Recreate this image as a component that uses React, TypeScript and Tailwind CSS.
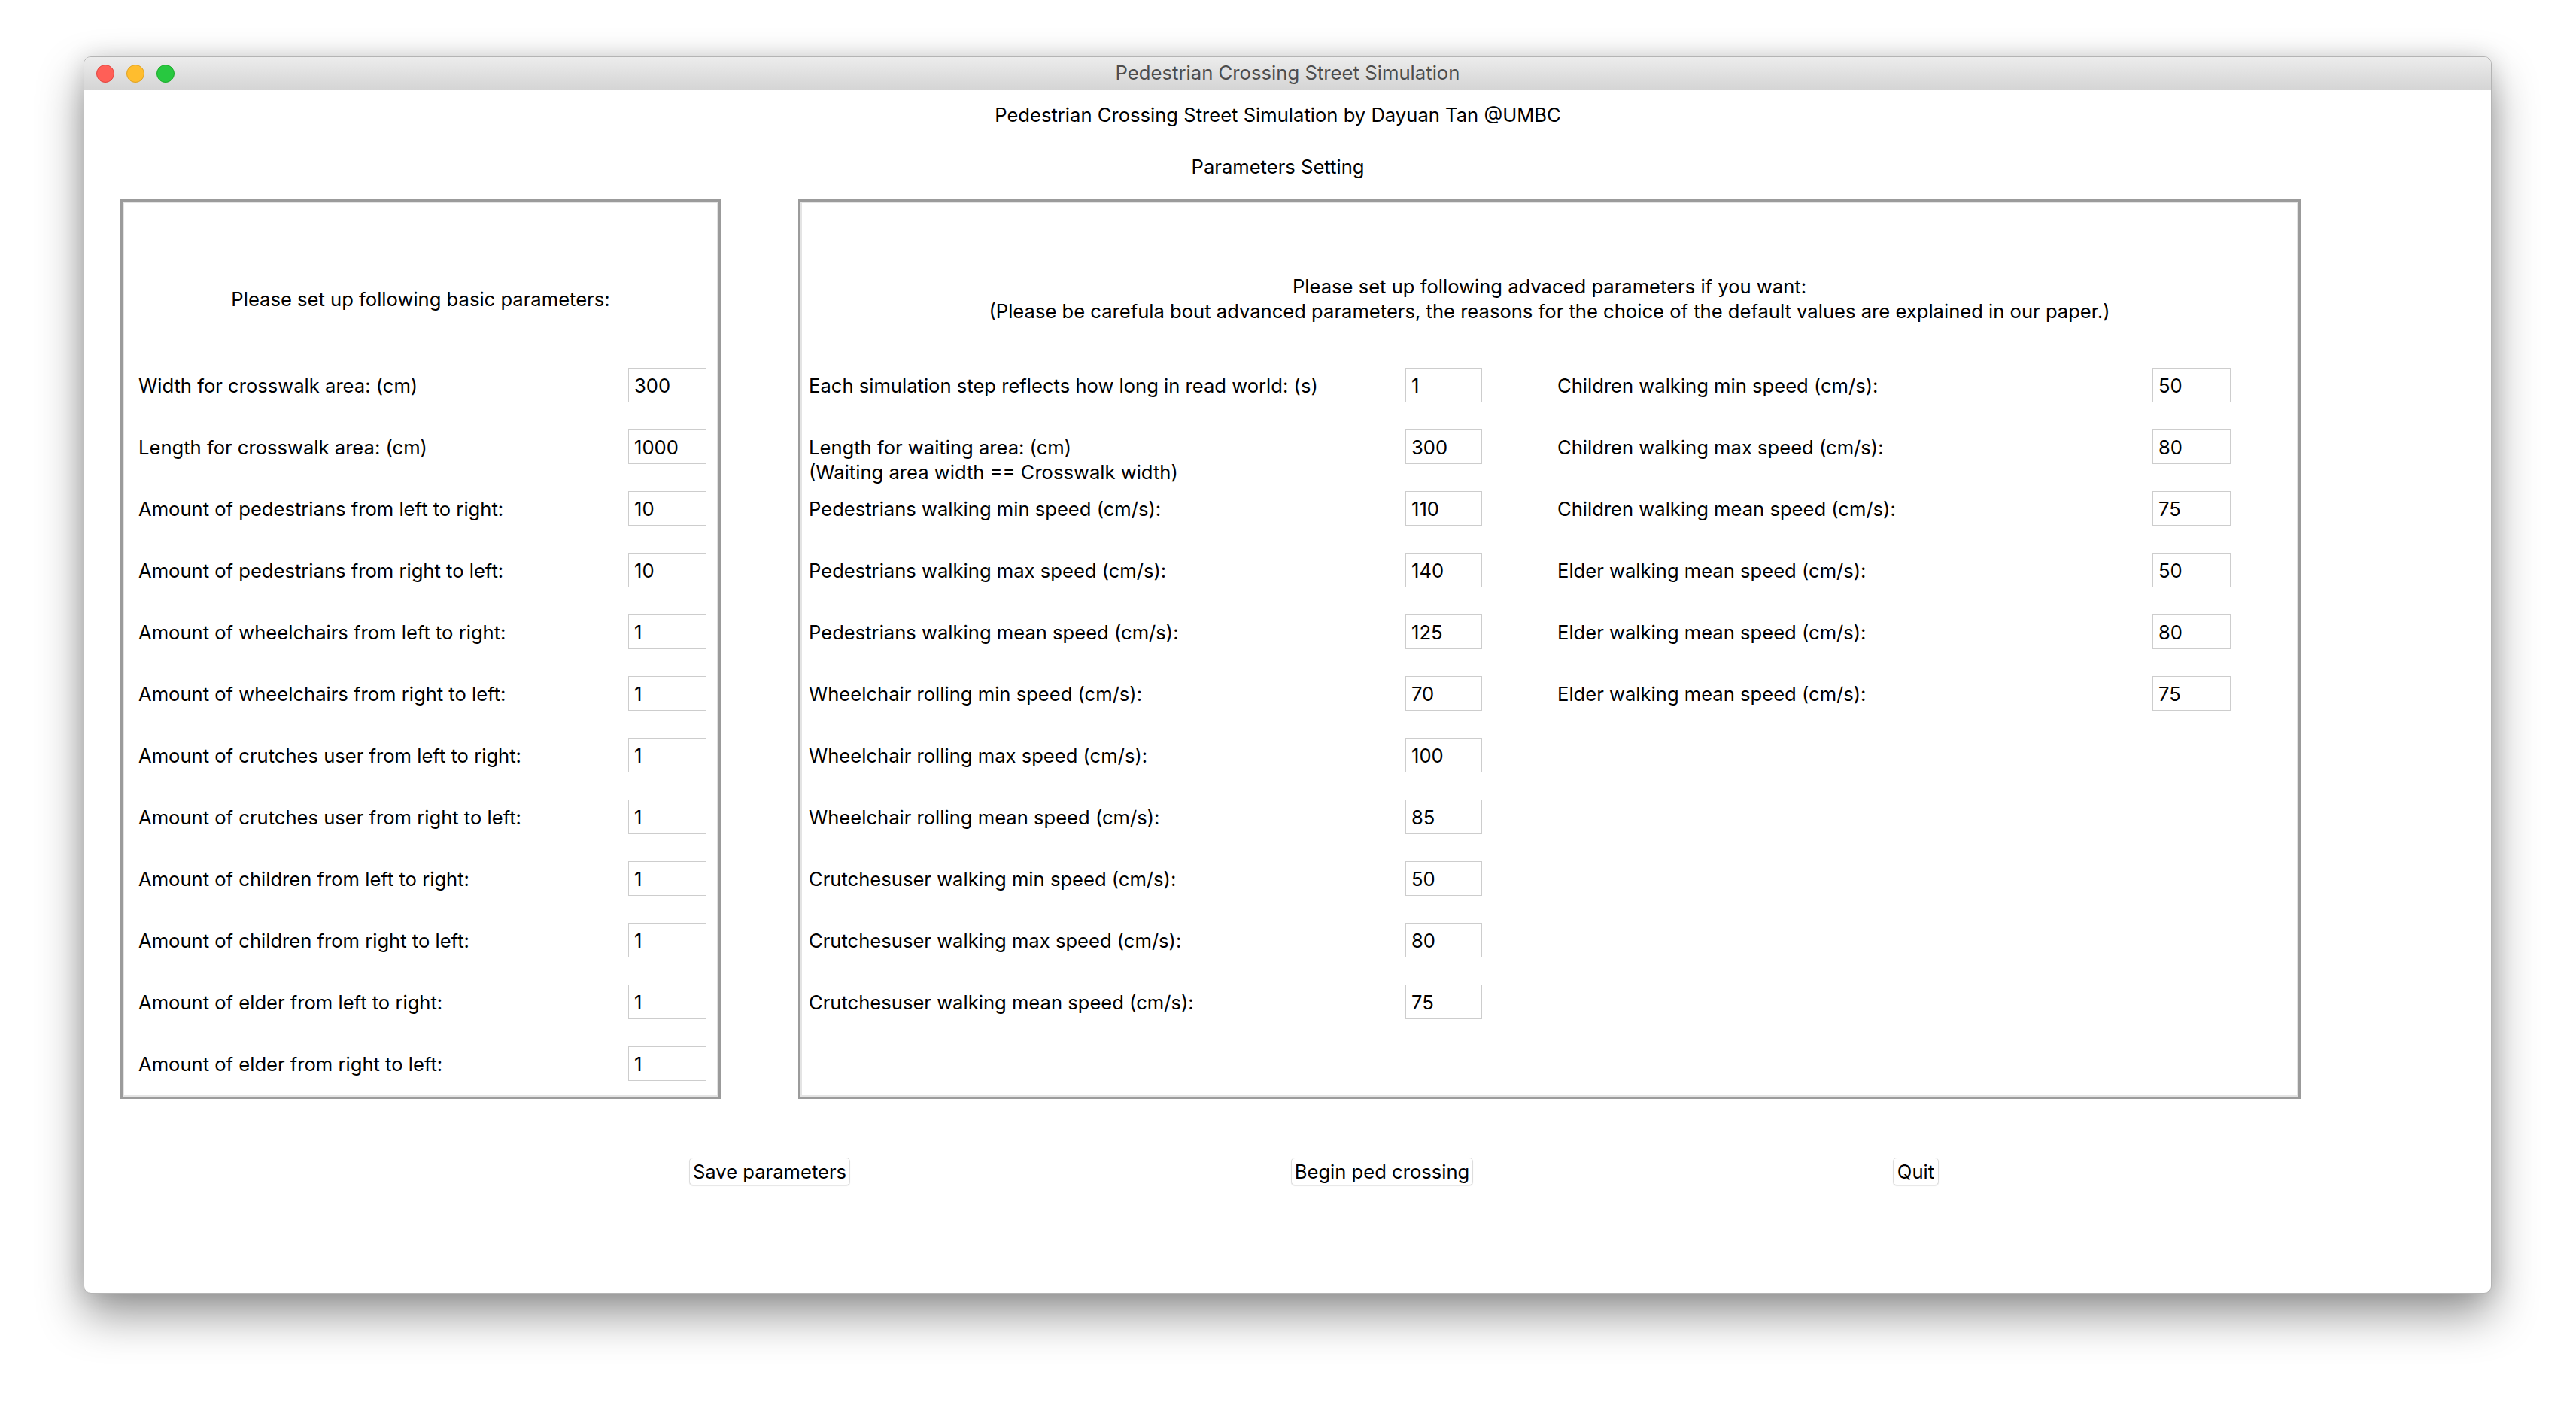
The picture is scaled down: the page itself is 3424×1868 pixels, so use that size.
import React from 'react'

type Param = { label: string; value: string; note?: string }

const basic: Param[] = [
  { label: 'Width for crosswalk area: (cm)', value: '300' },
  { label: 'Length for crosswalk area: (cm)', value: '1000' },
  { label: 'Amount of pedestrians from left to right:', value: '10' },
  { label: 'Amount of pedestrians from right to left:', value: '10' },
  { label: 'Amount of wheelchairs from left to right:', value: '1' },
  { label: 'Amount of wheelchairs from right to left:', value: '1' },
  { label: 'Amount of crutches user from left to right:', value: '1' },
  { label: 'Amount of crutches user from right to left:', value: '1' },
  { label: 'Amount of children from left to right:', value: '1' },
  { label: 'Amount of children from right to left:', value: '1' },
  { label: 'Amount of elder from left to right:', value: '1' },
  { label: 'Amount of elder from right to left:', value: '1' },
]

const advancedLeft: Param[] = [
  { label: 'Each simulation step reflects how long in read world: (s)', value: '1' },
  { label: 'Length for waiting area: (cm)', note: '(Waiting area width == Crosswalk width)', value: '300' },
  { label: 'Pedestrians walking min speed (cm/s):', value: '110' },
  { label: 'Pedestrians walking max speed (cm/s):', value: '140' },
  { label: 'Pedestrians walking mean speed (cm/s):', value: '125' },
  { label: 'Wheelchair rolling min speed (cm/s):', value: '70' },
  { label: 'Wheelchair rolling max speed (cm/s):', value: '100' },
  { label: 'Wheelchair rolling mean speed (cm/s):', value: '85' },
  { label: 'Crutchesuser walking min speed (cm/s):', value: '50' },
  { label: 'Crutchesuser walking max speed (cm/s):', value: '80' },
  { label: 'Crutchesuser walking mean speed (cm/s):', value: '75' },
]

const advancedRight: Param[] = [
  { label: 'Children walking min speed (cm/s):', value: '50' },
  { label: 'Children walking max speed (cm/s):', value: '80' },
  { label: 'Children walking mean speed (cm/s):', value: '75' },
  { label: 'Elder walking mean speed (cm/s):', value: '50' },
  { label: 'Elder walking mean speed (cm/s):', value: '80' },
  { label: 'Elder walking mean speed (cm/s):', value: '75' },
]

function Field({ value, wide }: { value: string; wide?: boolean }) {
  return (
    <input
      defaultValue={value}
      className={`${wide ? 'w-[104px]' : 'w-[102px]'} h-[46px] shrink-0 border border-[#cdcdcd] bg-white pl-[7px] text-[25.6px] text-black outline-none`}
      style={{ fontFamily: 'Inter, "Liberation Sans", sans-serif' }}
    />
  )
}

function Row({ p, labelW, wide }: { p: Param; labelW: string; wide?: boolean }) {
  return (
    <div className="flex h-[82px] items-start pt-[18px]">
      <div className={`${labelW} mt-[7px] leading-[33px] whitespace-nowrap`}>
        <div>{p.label}</div>
        {p.note && <div>{p.note}</div>}
      </div>
      <Field value={p.value} wide={wide} />
    </div>
  )
}

export default function App() {
  return (
    <div
      className="min-h-screen w-full bg-white text-[25.6px] text-black"
      style={{ fontFamily: 'Inter, "Liberation Sans", sans-serif' }}
    >
      <div className="pl-[111px] pt-[75px] pb-[148px]">
        {/* Window */}
        <div className="flex h-[1645px] w-[3201px] flex-col overflow-hidden rounded-[10px] border border-[#b4b4b4] bg-white shadow-[0_28px_60px_rgba(0,0,0,0.42),0_0_30px_rgba(0,0,0,0.12)]">
          {/* Title bar */}
          <div className="grid h-[44px] shrink-0 grid-cols-[1fr_auto_1fr] items-center border-b border-[#b3b3b3] bg-gradient-to-b from-[#ececec] to-[#d5d5d5]">
            <div className="flex items-center gap-[16px] pl-[16px]">
              <span className="h-[24px] w-[24px] rounded-full border border-[#e0443e] bg-[#ff5f57]" />
              <span className="h-[24px] w-[24px] rounded-full border border-[#dea123] bg-[#ffbd2e]" />
              <span className="h-[24px] w-[24px] rounded-full border border-[#1aab29] bg-[#28c840]" />
            </div>
            <div className="text-[25.7px] text-[#4d4d4d]">Pedestrian Crossing Street Simulation</div>
            <div />
          </div>

          {/* Content */}
          <div className="flex flex-1 flex-col">
            <div className="pr-[26px] pt-[16px] text-center leading-[33px]">
              Pedestrian Crossing Street Simulation by Dayuan Tan @UMBC
            </div>
            <div className="mt-[36px] pr-[26px] text-center leading-[33px]">Parameters Setting</div>

            <div className="mt-[27px] flex pl-[48px]">
              {/* Basic */}
              <div className="w-[798px] border-[3px] border-[#9b9b9b] pb-[3px] shadow-[inset_0_0_0_2px_#e4e4e4]">
                <div className="flex h-[203px] items-center justify-center pt-[55px] leading-[33px]">
                  Please set up following basic parameters:
                </div>
                <div className="pl-[21px] pr-[16px]">
                  {basic.map((p, i) => (
                    <Row key={i} p={p} labelW="flex-1" wide />
                  ))}
                </div>
              </div>

              {/* Advanced */}
              <div className="ml-[103px] w-[1997px] border-[3px] border-[#9b9b9b] pb-[3px] shadow-[inset_0_0_0_2px_#e4e4e4]">
                <div className="flex h-[203px] flex-col items-center justify-center pt-[55px] text-center leading-[33px]">
                  <div>Please set up following advaced parameters if you want:</div>
                  <div>
                    (Please be carefula bout advanced parameters, the reasons for the choice of the default values are
                    explained in our paper.)
                  </div>
                </div>
                <div className="flex pl-[11px]">
                  <div>
                    {advancedLeft.map((p, i) => (
                      <Row key={i} p={p} labelW="w-[793px]" />
                    ))}
                  </div>
                  <div className="ml-[100px]">
                    {advancedRight.map((p, i) => (
                      <Row key={i} p={p} labelW="w-[791px]" wide />
                    ))}
                  </div>
                </div>
              </div>
            </div>

            {/* Buttons */}
            <div className="mt-[78px] flex pl-[804px]">
              <button className="h-[37px] w-[214px] rounded-[5px] border border-[#dddddd] bg-white leading-none shadow-[0_1px_1px_rgba(0,0,0,0.1)]">
                Save parameters
              </button>
              <button className="ml-[586px] h-[37px] w-[242px] rounded-[5px] border border-[#dddddd] bg-white leading-none shadow-[0_1px_1px_rgba(0,0,0,0.1)]">
                Begin ped crossing
              </button>
              <button className="ml-[558px] h-[37px] w-[61px] rounded-[5px] border border-[#dddddd] bg-white leading-none shadow-[0_1px_1px_rgba(0,0,0,0.1)]">
                Quit
              </button>
            </div>
          </div>
        </div>
      </div>
    </div>
  )
}
